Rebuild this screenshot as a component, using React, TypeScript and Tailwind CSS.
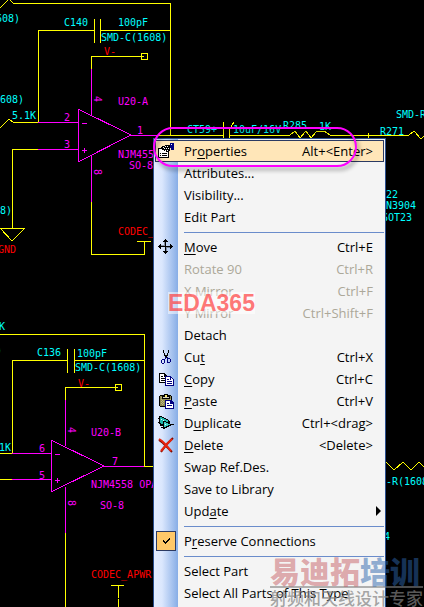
import type { ReactNode } from "react";

type Item = {
  label: string; // "&" marks the mnemonic letter
  shortcut?: string;
  icon?: ReactNode;
  active?: boolean;
  disabled?: boolean;
  submenu?: boolean;
};

function PropertiesIcon() {
  return (
    <svg width="16" height="16" viewBox="0 0 16 16" shapeRendering="crispEdges">
      <path d="M0 5h11v10H0z" fill="#000" />
      <path d="M1 6h9v8H1z" fill="#fff" />
      <path d="M2 10h1v1H2zM4 10h5v1H4zM2 12h1v1H2zM4 12h5v1H4z" fill="#000" />
      <path d="M4 3h3V2h5v6h-2v1H8V8H6V7H4V6H3V4h1z" fill="#000" />
      <path d="M5 4h1v1H5zM7 3h1v1H7zM9 3h1v1H9zM6 5h1v1H6zM8 5h1v1H8zM10 5h1v1h-1zM7 7h1v1H7zM9 7h1v1H9z" fill="#fff" />
      <path d="M12 0h4v7h-3V5h-1z" fill="#000080" />
      <path d="M13 1h1v1h-1z" fill="#fff" />
    </svg>
  );
}

function MoveIcon() {
  return (
    <svg width="16" height="16" viewBox="0 0 16 16" shapeRendering="crispEdges">
      <path
        d="M7 0h1v1h1v1h1v1H8v4h4V5h1v1h1v1h1v1h-1v1h-1v1h-1V8H8v4h2v1H9v1H8v1H7v-1H6v-1H5v-1h2V8H3v2H2V9H1V8H0V7h1V6h1V5h1v2h4V3H5V2h1V1h1z"
        fill="#000"
      />
      <path d="M6 3h1v4H6zM8 8h1v4H8zM3 6h3v1H3zM9 8h3v1H9z" fill="#000" fillOpacity="0.35" />
    </svg>
  );
}

function CutIcon() {
  return (
    <svg width="16" height="16" viewBox="0 0 16 16" shapeRendering="crispEdges">
      <path
        d="M5 1h1v3H5zM6 4h1v3H6zM10 1h1v3h-1zM9 4h1v3H9zM7 6h2v3H7z"
        fill="#000"
      />
      <path
        d="M7 8h1v2H7zM9 8h1v2H9zM4 10h3v1H4zM3 11h1v3H3zM4 14h2v1H4zM6 11h1v3H6zM9 9h3v1H9zM9 10h1v4H9zM12 10h1v3h-1zM10 13h2v1h-2z"
        fill="#000080"
      />
    </svg>
  );
}

function CopyIcon() {
  return (
    <svg width="16" height="16" viewBox="0 0 16 16" shapeRendering="crispEdges">
      <path d="M1 2h5l3 3v7H1z" fill="#000" />
      <path d="M2 3h4v3h2v5H2z" fill="#fff" />
      <path d="M3 5h2v1H3zM3 7h4v1H3zM3 9h4v1H3z" fill="#000" />
      <path d="M7 5h5l4 4v6H7z" fill="#000080" />
      <path d="M8 6h4v3h3v5H8z" fill="#fff" />
      <path d="M13 7l2 2h-2z" fill="#fff" />
      <path d="M9 8h2v1H9zM9 10h5v1H9zM9 12h5v1H9z" fill="#000080" />
    </svg>
  );
}

function PasteIcon() {
  return (
    <svg width="16" height="16" viewBox="0 0 16 16" shapeRendering="crispEdges">
      <path d="M2 2h11v1h1v11H2v-1H1V3h1z" fill="#000" />
      <path d="M2 3h11v10H2z" fill="#8f8a50" />
      <path d="M3 4h1v1H3zM3 6h1v1H3zM3 8h1v1H3zM3 10h1v1H3zM4 7h1v1H4zM4 9h1v1H4zM4 11h1v1H4zM5 8h1v1H5zM5 10h1v1H5zM12 6h1v1h-1z" fill="#bdb680" />
      <path d="M4 3h2V1h4v2h2v3H4z" fill="#000" />
      <path d="M5 4h6v1H5z" fill="#d6d3c0" />
      <path d="M7 2h2v2H7z" fill="#f5e76b" />
      <path d="M7 7h6l3 3v6H7z" fill="#000080" />
      <path d="M8 8h4v3h3v4H8z" fill="#fff" />
      <path d="M9 10h2v1H9zM9 12h5v1H9z" fill="#000080" />
    </svg>
  );
}

function DuplicateIcon() {
  return (
    <svg width="16" height="16" viewBox="0 0 16 16" shapeRendering="crispEdges">
      <path d="M1 1h3v1h2v1h2v1h2v1h1v1h1v2H9v1H7v1H5v1H2V9H1z" fill="#000" />
      <path d="M2 2h2v1h2v1h2v1h2v2H8v1H6v1H3V8H2z" fill="#1fb5ab" />
      <path d="M5 6h3v1h2v1h2v1h1v2h-2v1H9v1H7v1H5z" fill="#000" />
      <path d="M6 7h2v1h2v1h2v1h-2v1H8v1H6z" fill="#38cdc3" />
      <path d="M0 3h1v1H0zM0 7h1v1H0zM3 12h2v1H3zM13 9h3v1h-3z" fill="#000" />
      <path d="M3 4h1v1H3zM5 5h1v1H5zM7 9h1v1H7z" fill="#d8fffb" />
    </svg>
  );
}

function DeleteIcon() {
  return (
    <svg width="16" height="16" viewBox="0 0 16 16">
      <path d="M1 3l4 3 9 9M15 1L9 7l-6 8" fill="none" stroke="#7a0c00" strokeWidth="2" />
      <path d="M1 2l3 2 4 4 5 6M14 2L8 8l-5 6" fill="none" stroke="#e62410" strokeWidth="2" />
    </svg>
  );
}

const groups: Item[][] = [
  [
    { label: "Pr&operties", shortcut: "Alt+<Enter>", icon: <PropertiesIcon />, active: true },
    { label: "Attributes..." },
    { label: "Visibility..." },
    { label: "Edit Part" },
  ],
  [
    { label: "&Move", shortcut: "Ctrl+E", icon: <MoveIcon /> },
    { label: "Rotate 90", shortcut: "Ctrl+R", disabled: true },
    { label: "X Mirror", shortcut: "Ctrl+F", disabled: true },
    { label: "Y Mirror", shortcut: "Ctrl+Shift+F", disabled: true },
    { label: "Detach" },
    { label: "Cu&t", shortcut: "Ctrl+X", icon: <CutIcon /> },
    { label: "&Copy", shortcut: "Ctrl+C", icon: <CopyIcon /> },
    { label: "&Paste", shortcut: "Ctrl+V", icon: <PasteIcon /> },
    { label: "D&uplicate", shortcut: "Ctrl+<drag>", icon: <DuplicateIcon /> },
    { label: "&Delete", shortcut: "<Delete>", icon: <DeleteIcon /> },
    { label: "Swap Ref.Des." },
    { label: "Save to Library" },
    { label: "Upd&ate", submenu: true },
  ],
];

const lastGroup: Item[] = [
  { label: "Select Part" },
  { label: "Select All Parts of This Type" },
];

function Label({ text }: { text: string }) {
  const at = text.indexOf("&");
  if (at < 0) return <span>{text}</span>;
  return (
    <span>
      {text.slice(0, at)}
      <span className="underline underline-offset-2">{text[at + 1]}</span>
      {text.slice(at + 2)}
    </span>
  );
}

function MenuRow({ item }: { item: Item }) {
  return (
    <button
      type="button"
      role="menuitem"
      disabled={item.disabled}
      className={
        "flex h-[22px] w-full items-center border pr-[10px] text-left whitespace-nowrap " +
        (item.active ? "border-[#2b3a63] bg-[#ffe6b8] " : "border-transparent ") +
        (item.disabled ? "text-[#aca899]" : "text-black")
      }
    >
      <span className="flex w-7 shrink-0 items-center pl-[2px]">{item.icon}</span>
      <Label text={item.label} />
      <span className="ml-auto">{item.shortcut}</span>
      {item.submenu && (
        <svg width="5" height="10" viewBox="0 0 5 10" className="-mr-2">
          <path d="M0 0l5 5-5 5z" fill="#000" />
        </svg>
      )}
    </button>
  );
}

function Separator() {
  return (
    <div role="separator" className="ml-[29px] flex h-2 items-center">
      <div className="h-px w-full bg-[#6a8ccb]" />
    </div>
  );
}

function ContextMenu() {
  return (
    <div
      role="menu"
      className="absolute top-[138px] left-[153px] w-[233px] border border-[#2a4f8f] bg-[#f4f4f4] bg-[linear-gradient(to_right,#e3edff_0px,#dbe7fd_8px,#87ade6_24px,#f4f4f4_24px)] p-px font-['Open_Sans','Noto_Sans',sans-serif] text-[13px] leading-5"
    >
      {groups.map((items, i) => (
        <div key={i}>
          {items.map((item) => (
            <MenuRow key={item.label} item={item} />
          ))}
          <Separator />
        </div>
      ))}
      <label className="flex h-[22px] items-center text-black">
        <span className="grid w-[29px] shrink-0 pl-px">
          <input
            type="checkbox"
            defaultChecked
            className="col-start-1 row-start-1 size-5 appearance-none border border-[#2b3a63] bg-[#ffc868]"
          />
          <svg
            width="20"
            height="20"
            viewBox="0 0 20 20"
            className="pointer-events-none col-start-1 row-start-1"
            shapeRendering="crispEdges"
          >
            <path d="M7 9h1v1h1v1h1v-1h1V9h1V8h1V7h1v2h-1v1h-1v1h-1v1h-1v1H9v-1H8v-1H7z" fill="#000" />
          </svg>
        </span>
        <Label text="P&reserve Connections" />
      </label>
      <Separator />
      {lastGroup.map((item) => (
        <MenuRow key={item.label} item={item} />
      ))}
      <Separator />
    </div>
  );
}

function Schematic() {
  return (
    <svg
      width="424"
      height="607"
      viewBox="0 0 424 607"
      className="block font-['DejaVu_Sans_Mono','Liberation_Mono',monospace] text-[10px]"
      role="img"
      aria-label="Schematic"
    >
      <g fill="none" stroke="#ffff00" shapeRendering="crispEdges">
        <path d="M0 8L9-1L13 3H170V135" />
        <path d="M38 122V30H94M94 19V43M100 19V43M100 30H171" />
        <path d="M0 128L9 119L13 122H38" />
        <path d="M91 69V56H144M141 53H147V59H141Z" />
        <path d="M38 149H12V228M0 228H25L12 241L0 228" />
        <path d="M91 202V254H144V241M137 241H151" />
        <path d="M157 135H223M223 122V146M234 122L229 130V142L234 150M229 135H290L295 131L300 138L306 131L311 138L317 131L324 131L330 135H409L414 131L421 139L424 136M368 133V138" />
        <path d="M0 334H144V466H153" />
        <path d="M12 453V360H67M67 349V373M74 349V373M74 360H144" />
        <path d="M65 400V387H118M115 384H121V390H115Z" />
        <path d="M0 453H12M0 479H12M65 533V607M111 585H124M118 585V598M118 599V607" />
        <path d="M386 462L394 470L403 462L411 470L419 462L424 467" />
      </g>
      <g fill="none" stroke="#ff00ff" shapeRendering="crispEdges">
        <path d="M38 122H78M38 149H78M91 69V116M91 156V202M131 135H158M78 109L131 135L78 162Z" />
        <path d="M82 123H87M82 150H87M84 148V153" />
        <path d="M12 453H51M12 479H51M65 400V446M65 487V533M104 466H144M51 440L104 466L51 492Z" />
        <path d="M55 454H60M55 480H60M57 478V483" />
      </g>
      <g fill="#00ffff">
        <text x="-4" y="22">608)</text>
        <text x="64" y="26">C140</text>
        <text x="118" y="26">100pF</text>
        <text x="101" y="41">SMD-C(1608)</text>
        <text x="0" y="103">608)</text>
        <text x="12" y="119">5.1K</text>
        <text x="-24" y="214">(1608)</text>
        <text x="187" y="133">CT59+</text>
        <text x="233" y="133">10uF/16V</text>
        <text x="283" y="129">R285</text>
        <text x="319" y="130">1K</text>
        <text x="396" y="118">SMD-R</text>
        <text x="380" y="135">R271</text>
        <text x="386" y="198">22</text>
        <text x="386" y="209">N3904</text>
        <text x="382" y="221">SOT23</text>
        <text x="-1" y="330">K</text>
        <text x="-4" y="354">)</text>
        <text x="37" y="356">C136</text>
        <text x="77" y="357">100pF</text>
        <text x="75" y="371">SMD-C(1608)</text>
        <text x="-1" y="451">1K</text>
        <text x="386" y="485">-R(1608)</text>
        <text x="384" y="540">4</text>
      </g>
      <g fill="#ff00ff">
        <text x="118" y="105">U20-A</text>
        <text x="64" y="121">2</text>
        <text x="64" y="148">3</text>
        <text x="137" y="134">1</text>
        <text x="118" y="158">NJM4558</text>
        <text x="129" y="169">SO-8</text>
        <text transform="translate(94 96) rotate(90)">4</text>
        <text transform="translate(94 169) rotate(90)">8</text>
        <text x="91" y="436">U20-B</text>
        <text x="39" y="452">6</text>
        <text x="39" y="479">5</text>
        <text x="112" y="465">7</text>
        <text x="91" y="488">NJM4558 OPA</text>
        <text x="100" y="509">SO-8</text>
        <text transform="translate(68 427) rotate(90)">4</text>
        <text transform="translate(68 500) rotate(90)">8</text>
      </g>
      <g fill="#ff0000">
        <text x="104" y="55">V-</text>
        <text x="-2" y="253">GND</text>
        <text x="118" y="235">CODEC_</text>
        <text x="78" y="387">V-</text>
        <text x="91" y="578">CODEC_APWR</text>
      </g>
    </svg>
  );
}

export default function App() {
  return (
    <main className="relative h-screen overflow-hidden bg-black">
      <Schematic />
      <ContextMenu />

      {/* pen mark around the Properties command */}
      <div className="pointer-events-none absolute top-[127px] left-[153px] h-10 w-[204px] rounded-[20px] border-2 border-[#ff00ff] drop-shadow-[2px_3px_2px_rgba(0,0,0,0.45)]" />

      <div className="pointer-events-none absolute top-[292px] left-[168px] bg-white/50 font-['Liberation_Sans',Arial,sans-serif] text-[23px] leading-[22px] font-bold text-[#ff3c3c]/70">
        EDA365
      </div>

      <div className="pointer-events-none absolute top-[554px] left-[270px] font-['Noto_Sans_CJK_SC',sans-serif] whitespace-nowrap">
        <div className="border-b-2 border-[#808080]/60 text-[30px] leading-8 font-black">
          <span className="text-[#b83038]/40">易迪拓</span>
          <span className="text-[#2c64ac]/50">培训</span>
        </div>
        <div className="text-[17px] leading-5 font-medium text-[#808080]/70">射频和天线设计专家</div>
      </div>
    </main>
  );
}
